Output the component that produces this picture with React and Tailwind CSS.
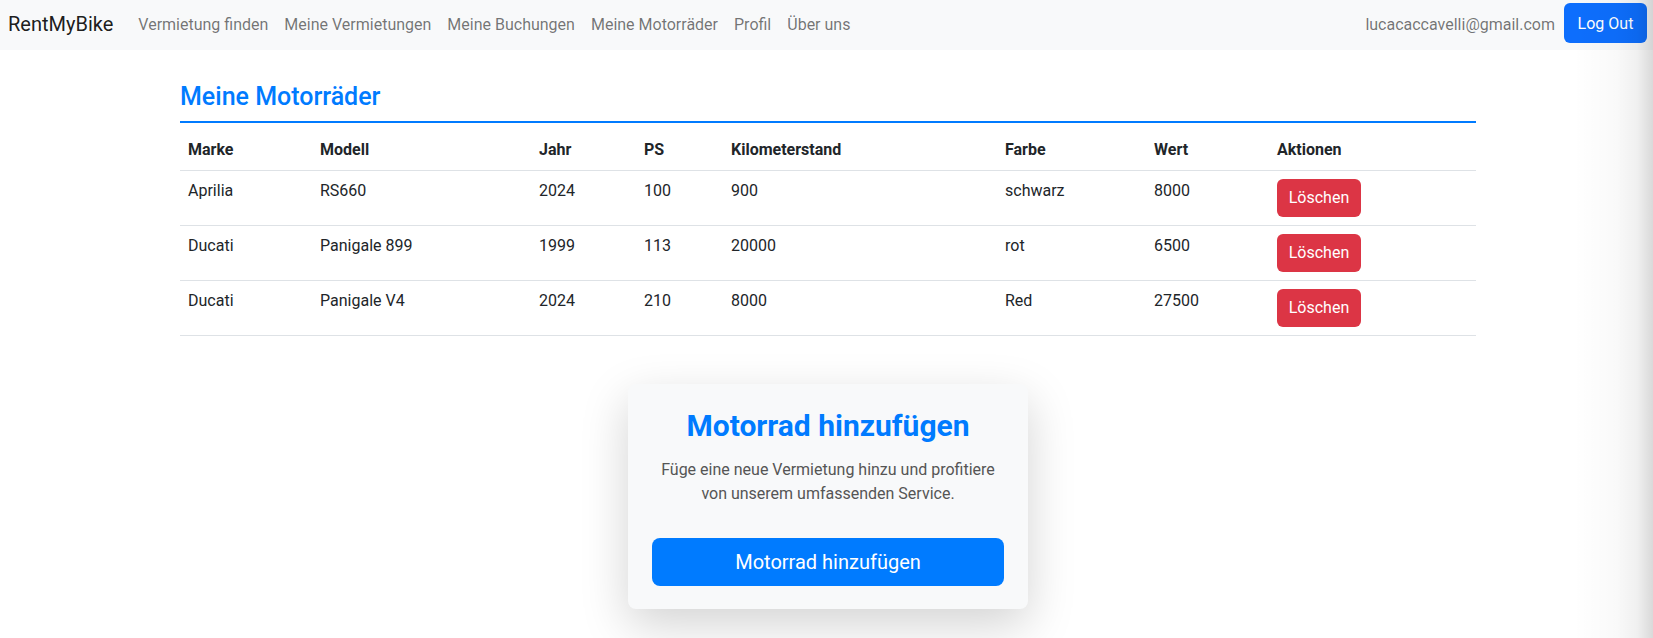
import React from 'react';

const bikes = [
  { marke: 'Aprilia', modell: 'RS660', jahr: 2024, ps: 100, km: 900, farbe: 'schwarz', wert: 8000 },
  { marke: 'Ducati', modell: 'Panigale 899', jahr: 1999, ps: 113, km: 20000, farbe: 'rot', wert: 6500 },
  { marke: 'Ducati', modell: 'Panigale V4', jahr: 2024, ps: 210, km: 8000, farbe: 'Red', wert: 27500 },
];

const navLinks = ['Vermietung finden', 'Meine Vermietungen', 'Meine Buchungen', 'Meine Motorräder', 'Profil', 'Über uns'];

const columns = [
  { label: 'Marke', w: 'w-[132px]' },
  { label: 'Modell', w: 'w-[219px]' },
  { label: 'Jahr', w: 'w-[105px]' },
  { label: 'PS', w: 'w-[87px]' },
  { label: 'Kilometerstand', w: 'w-[274px]' },
  { label: 'Farbe', w: 'w-[149px]' },
  { label: 'Wert', w: 'w-[123px]' },
  { label: 'Aktionen', w: 'w-[207px]' },
];

export default function App() {
  return (
    <div className="relative min-h-screen overflow-hidden bg-white font-['Roboto',sans-serif] text-[#212529]">
      {/* NAVBAR */}
      <nav className="flex h-[50px] items-start bg-[#f8f9fa] pt-[3px] pl-[8px] pr-[6px]">
        <span className="flex h-[40px] items-center pt-[2px] text-[20px] text-black/90">RentMyBike</span>
        <ul className="ml-[17px] flex">
          {navLinks.map((l) => (
            <li key={l} className="flex h-[40px] items-center px-2 pt-[3px] text-[16px] text-black/55">
              {l}
            </li>
          ))}
        </ul>
        <div className="ml-auto flex items-center gap-[9px]">
          <span className="flex h-[40px] items-center pt-[3px] text-[16px] text-black/55">lucacaccavelli@gmail.com</span>
          <button className="h-[40px] w-[83px] rounded-md bg-[#0d6efd] pt-[1px] text-[16px] text-white">Log Out</button>
        </div>
      </nav>

      {/* CONTENT */}
      <main className="ml-[180px] w-[1296px]">
        <h2 className="mt-8 border-b-2 border-[#007bff] pb-[9px] text-[25px] font-medium leading-[1.2] text-[#007bff]">
          Meine Motorräder
        </h2>

        <table className="mt-[7px] w-full table-fixed border-collapse text-left text-[16px]">
          <thead>
            <tr className="border-b border-[#dee2e6]">
              {columns.map((c) => (
                <th key={c.label} className={`${c.w} p-2 font-bold leading-6`}>
                  {c.label}
                </th>
              ))}
            </tr>
          </thead>
          <tbody>
            {bikes.map((b, i) => (
              <tr key={i} className="border-b border-[#dee2e6] align-top">
                <td className="p-2 leading-6">{b.marke}</td>
                <td className="p-2 leading-6">{b.modell}</td>
                <td className="p-2 leading-6">{b.jahr}</td>
                <td className="p-2 leading-6">{b.ps}</td>
                <td className="p-2 leading-6">{b.km}</td>
                <td className="p-2 leading-6">{b.farbe}</td>
                <td className="p-2 leading-6">{b.wert}</td>
                <td className="p-2">
                  <button className="h-[38px] w-[84px] rounded-md bg-[#dc3545] text-[16px] text-white">Löschen</button>
                </td>
              </tr>
            ))}
          </tbody>
        </table>

        {/* ADD CARD */}
        <div className="mx-auto mt-[48px] w-[400px] rounded-lg bg-[#f8f9fa] px-6 pt-[24px] pb-[23px] text-center shadow-[0_1rem_3rem_rgba(0,0,0,0.175)]">
          <h3 className="text-[30px] font-bold leading-[1.2] text-[#007bff]">Motorrad hinzufügen</h3>
          <p className="mt-[14px] text-[16px] leading-6 text-[#555]">
            Füge eine neue Vermietung hinzu und profitiere von unserem umfassenden Service.
          </p>
          <button className="mt-[32px] h-[48px] w-full rounded-lg bg-[#007bff] text-[20px] text-white">
            Motorrad hinzufügen
          </button>
        </div>
      </main>

      {/* right edge shade */}
      <div className="pointer-events-none absolute top-0 right-0 h-full w-[80px] bg-[linear-gradient(to_right,rgba(0,0,0,0)_0%,rgba(0,0,0,0.025)_55%,rgba(0,0,0,0.06)_80%,rgba(0,0,0,0.15)_100%)]" />
    </div>
  );
}
